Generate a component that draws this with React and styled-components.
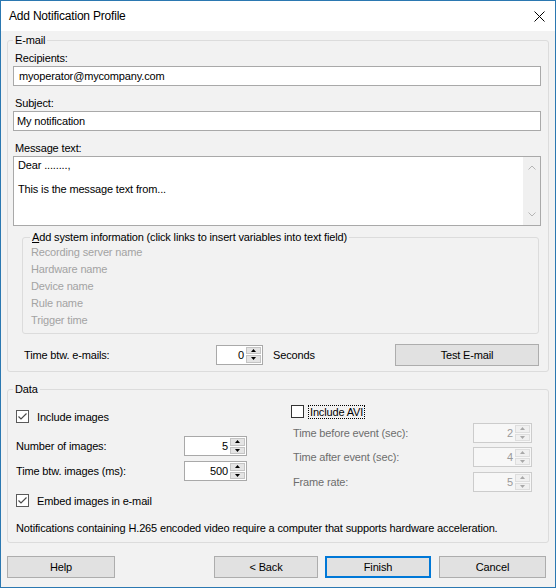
import React from 'react';
import styled, { createGlobalStyle } from 'styled-components';

const GlobalStyle = createGlobalStyle`
  html, body {
    margin: 0;
    padding: 0;
    background: #ffffff;
  }
  body {
    font-family: "Liberation Sans", Arial, sans-serif;
    font-size: 11px;
    letter-spacing: -0.15px;
    color: #000;
  }
  * {
    box-sizing: border-box;
  }
`;

const Window = styled.div`
  width: 556px;
  height: 588px;
  border: 1px solid #2b78b1;
  background: #f2f2f2;
  display: flex;
  flex-direction: column;
`;

const TitleBar = styled.div`
  height: 30px;
  flex: none;
  background: #ffffff;
  display: flex;
  align-items: center;
  justify-content: space-between;
  padding: 0 10px 0 8px;
  font-size: 12px;
  letter-spacing: -0.2px;
`;

const Body = styled.div`
  flex: 1;
  display: flex;
  flex-direction: column;
  padding: 2px 6px 0 6px;
`;

const Group = styled.fieldset`
  margin: ${p => p.$margin || '0'};
  padding: ${p => p.$padding || '3px 7px 6px 5px'};
  border: 1px solid #dcdcdc;
  border-radius: 3px;
  min-width: 0;
`;

const Legend = styled.legend`
  padding: 0 2px;
  line-height: 14px;
  color: #000;
  u {
    text-decoration: underline;
  }
`;

const FieldLabel = styled.div`
  height: 16px;
  line-height: 16px;
  padding-left: 2px;
`;

const TextBox = styled.div`
  height: 20px;
  line-height: 18px;
  border: 1px solid #a9a9a9;
  background: #fff;
  padding-left: ${p => p.$inset || 5}px;
  margin-bottom: 9px;
  white-space: nowrap;
`;

const MemoBox = styled.div`
  height: 70px;
  border: 1px solid #a9a9a9;
  background: #fff;
  display: flex;
`;

const MemoText = styled.div`
  flex: 1;
  padding: 2px 4px;
  line-height: 12px;
`;

const ScrollTrack = styled.div`
  width: 17px;
  background: #f0f0f0;
  display: flex;
  flex-direction: column;
  justify-content: space-between;
  align-items: center;
  padding: 8px 0 8px;
`;

const LinkList = styled.div`
  display: flex;
  flex-direction: column;
  padding-left: 1px;
`;

const LinkItem = styled.div`
  line-height: 17px;
  color: #a3a3a3;
`;

const Row = styled.div`
  display: flex;
  align-items: center;
  height: ${p => p.$h || 20}px;
  margin-top: ${p => p.$mt || 0}px;
  margin-left: ${p => p.$ml || 0}px;
`;

const RowLabel = styled.div`
  width: ${p => p.$w}px;
  flex: none;
  color: ${p => (p.$disabled ? '#6d6d6d' : '#000')};
`;

const SpinBox = styled.div`
  width: ${p => p.$w}px;
  height: 20px;
  flex: none;
  display: flex;
  border: 1px solid ${p => (p.$disabled ? '#cccccc' : '#a9a9a9')};
  background: ${p => (p.$disabled ? '#f7f7f7' : '#fff')};
  color: ${p => (p.$disabled ? '#9a9a9a' : '#000')};
`;

const SpinValue = styled.div`
  flex: 1;
  text-align: right;
  line-height: 18px;
  padding-right: 2px;
`;

const SpinButtons = styled.div`
  width: 15px;
  margin: 1px 1px 1px 0;
  display: flex;
  flex-direction: column;
  gap: 1px;
`;

const SpinHalf = styled.div`
  flex: 1;
  display: flex;
  align-items: center;
  justify-content: center;
  background: ${p => (p.$disabled ? '#f0f0f0' : '#e4e4e4')};
  border: 1px solid ${p => (p.$disabled ? '#dedede' : '#c4c4c4')};
`;

const Suffix = styled.div`
  margin-left: 10px;
`;

const Button = styled.button`
  width: ${p => p.$w || 106}px;
  height: 22px;
  flex: none;
  font: inherit;
  letter-spacing: inherit;
  color: #000;
  background: #e1e1e1;
  border: 1px solid ${p => (p.$primary ? '#0078d7' : '#adadad')};
  box-shadow: ${p => (p.$primary ? 'inset 0 0 0 1px #0078d7' : 'none')};
  margin-left: ${p => p.$ml || 0}px;
  margin-right: ${p => p.$mr || 0}px;
  padding: 0;
`;

const Columns = styled.div`
  display: grid;
  grid-template-columns: 278px 1fr;
`;

const Column = styled.div`
  display: flex;
  flex-direction: column;
  padding-top: ${p => p.$pt || 0}px;
`;

const CheckRow = styled.div`
  display: flex;
  align-items: center;
  height: 17px;
  margin-top: ${p => p.$mt || 0}px;
  margin-left: ${p => p.$ml || 0}px;
`;

const Box = styled.div`
  width: 13px;
  height: 13px;
  flex: none;
  border: 1px solid ${p => (p.$checked ? '#5a5a5a' : '#333')};
  background: #fff;
  display: flex;
  align-items: center;
  justify-content: center;
`;

const CheckText = styled.div`
  margin-left: ${p => (p.$focus ? 4 : 6)}px;
  padding: 0 1px;
  line-height: 12px;
  border: 1px dotted ${p => (p.$focus ? '#000' : 'transparent')};
`;

const Note = styled.div`
  line-height: 16px;
  margin: 11px 0 0 3px;
`;

const ButtonBar = styled.div`
  display: flex;
  margin-top: 13px;
  padding-right: 3px;
`;

const Spacer = styled.div`
  flex: 1;
`;

const Chevron = ({ up }) => (
  <svg width="8" height="5" viewBox="0 0 8 5">
    <polyline
      points={up ? '0.5,4.5 4,1 7.5,4.5' : '0.5,0.5 4,4 7.5,0.5'}
      fill="none"
      stroke="#b5b5b5"
      strokeWidth="1"
    />
  </svg>
);

const Arrow = ({ up, disabled }) => (
  <svg width="5" height="3" viewBox="0 0 5 3">
    <polygon points={up ? '0,3 2.5,0 5,3' : '0,0 2.5,3 5,0'} fill={disabled ? '#a8a8a8' : '#000'} />
  </svg>
);

const Spinner = ({ value, width, disabled }) => (
  <SpinBox $w={width} $disabled={disabled}>
    <SpinValue>{value}</SpinValue>
    <SpinButtons>
      <SpinHalf $disabled={disabled}>
        <Arrow up disabled={disabled} />
      </SpinHalf>
      <SpinHalf $disabled={disabled}>
        <Arrow disabled={disabled} />
      </SpinHalf>
    </SpinButtons>
  </SpinBox>
);

const CheckBox = ({ checked, label, focus, mt, ml }) => (
  <CheckRow $mt={mt} $ml={ml}>
    <Box $checked={checked}>
      {checked && (
        <svg width="11" height="11" viewBox="0 0 11 11">
          <polyline points="1.5,5.5 4,8 9.5,2.5" fill="none" stroke="#4a4a4a" strokeWidth="1.2" />
        </svg>
      )}
    </Box>
    <CheckText $focus={focus}>{label}</CheckText>
  </CheckRow>
);

const systemLinks = ['Recording server name', 'Hardware name', 'Device name', 'Rule name', 'Trigger time'];

export default function App() {
  return (
    <>
      <GlobalStyle />
      <Window>
        <TitleBar>
          <span>Add Notification Profile</span>
          <svg width="11" height="11" viewBox="0 0 11 11">
            <path d="M0.5 0.5 L10.5 10.5 M10.5 0.5 L0.5 10.5" stroke="#000" strokeWidth="1" />
          </svg>
        </TitleBar>
        <Body>
          <Group>
            <Legend>E-mail</Legend>
            <FieldLabel>Recipients:</FieldLabel>
            <TextBox $inset={5}>myoperator@mycompany.com</TextBox>
            <FieldLabel>Subject:</FieldLabel>
            <TextBox $inset={3}>My notification</TextBox>
            <FieldLabel>Message text:</FieldLabel>
            <MemoBox>
              <MemoText>
                Dear ........,
                <br />
                <br />
                This is the message text from...
              </MemoText>
              <ScrollTrack>
                <Chevron up />
                <Chevron />
              </ScrollTrack>
            </MemoBox>
            <Group $margin="4px 2px 0 9px" $padding="0 8px 4px 7px">
              <Legend>
                <u>A</u>dd system information (click links to insert variables into text field)
              </Legend>
              <LinkList>
                {systemLinks.map(item => (
                  <LinkItem key={item}>{item}</LinkItem>
                ))}
              </LinkList>
            </Group>
            <Row $h={21} $mt={10} $ml={11}>
              <RowLabel $w={192}>Time btw. e-mails:</RowLabel>
              <Spinner value="0" width={47} />
              <Suffix>Seconds</Suffix>
              <Spacer />
              <Button $w={144} $mr={2}>Test E-mail</Button>
            </Row>
          </Group>

          <Group $margin="10px 0 0 0" $padding="0 8px 6px 5px">
            <Legend>Data</Legend>
            <Columns>
              <Column $pt={12}>
                <CheckBox checked label="Include images" ml={3} />
                <Row $mt={11} $ml={3}>
                  <RowLabel $w={168}>Number of images:</RowLabel>
                  <Spinner value="5" width={63} />
                </Row>
                <Row $mt={5} $ml={3}>
                  <RowLabel $w={168}>Time btw. images (ms):</RowLabel>
                  <Spinner value="500" width={63} />
                </Row>
                <CheckBox checked label="Embed images in e-mail" mt={11} ml={3} />
              </Column>
              <Column $pt={7}>
                <CheckBox label="Include AVI" focus />
                <Row $mt={3} $ml={2}>
                  <RowLabel $w={180} $disabled>Time before event (sec):</RowLabel>
                  <Spinner value="2" width={59} disabled />
                </Row>
                <Row $mt={4} $ml={2}>
                  <RowLabel $w={180} $disabled>Time after event (sec):</RowLabel>
                  <Spinner value="4" width={59} disabled />
                </Row>
                <Row $mt={5} $ml={2}>
                  <RowLabel $w={180} $disabled>Frame rate:</RowLabel>
                  <Spinner value="5" width={59} disabled />
                </Row>
              </Column>
            </Columns>
            <Note>
              Notifications containing H.265 encoded video require a computer that supports hardware acceleration.
            </Note>
          </Group>

          <ButtonBar>
            <Button $w={108}>Help</Button>
            <Spacer />
            <Button $w={104}>&lt; Back</Button>
            <Button $w={106} $ml={7} $primary>Finish</Button>
            <Button $w={107} $ml={8}>Cancel</Button>
          </ButtonBar>
        </Body>
      </Window>
    </>
  );
}
